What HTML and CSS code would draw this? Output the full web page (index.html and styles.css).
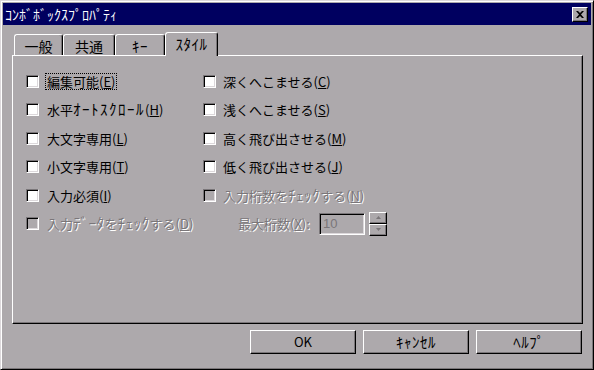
FILE: index.html
```html
<!DOCTYPE html>
<html lang="ja">
<head>
  <meta charset="UTF-8">
  <title>ｺﾝﾎﾞﾎﾞｯｸｽﾌﾟﾛﾊﾟﾃｨ</title>
  <link rel="stylesheet" href="styles.css">
</head>
<body>
  <div class="window">
    <div class="titlebar">
      <span class="title">ｺﾝﾎﾞﾎﾞｯｸｽﾌﾟﾛﾊﾟﾃｨ</span>
      <button class="close-btn">
        <svg width="8" height="7" viewBox="0 0 8 7"><path d="M0 0h2l2 2 2-2h2L5 3.5 8 7H6L4 5 2 7H0l3-3.5z" fill="#000"/></svg>
      </button>
    </div>

    <div class="content">
      <div class="tabs">
        <div class="tab w49">一般</div>
        <div class="tab w52">共通</div>
        <div class="tab w50"><span class="hw">ｷｰ</span></div>
        <div class="tab w53 selected"><span class="hw">ｽﾀｲﾙ</span></div>
      </div>

      <div class="panel">
        <div class="grid">
          <div class="col left-col">
            <div class="row"><span class="box"></span><span class="label focus">編集可能(<u>E</u>)</span></div>
            <div class="row"><span class="box"></span><span class="label">水平<span class="hw wide">ｵｰﾄｽｸﾛｰﾙ</span>(<u>H</u>)</span></div>
            <div class="row"><span class="box"></span><span class="label">大文字専用(<u>L</u>)</span></div>
            <div class="row"><span class="box"></span><span class="label">小文字専用(<u>T</u>)</span></div>
            <div class="row"><span class="box"></span><span class="label">入力必須(<u>I</u>)</span></div>
            <div class="row disabled"><span class="box"></span><span class="label">入力<span class="hw">ﾃﾞｰﾀ</span>を<span class="hw">ﾁｪｯｸ</span>する(<u>D</u>)</span></div>
          </div>
          <div class="col right-col">
            <div class="row"><span class="box"></span><span class="label">深くへこませる(<u>C</u>)</span></div>
            <div class="row"><span class="box"></span><span class="label">浅くへこませる(<u>S</u>)</span></div>
            <div class="row"><span class="box"></span><span class="label">高く飛び出させる(<u>M</u>)</span></div>
            <div class="row"><span class="box"></span><span class="label">低く飛び出させる(<u>J</u>)</span></div>
            <div class="row disabled"><span class="box"></span><span class="label">入力桁数を<span class="hw">ﾁｪｯｸ</span>する(<u>N</u>)</span></div>
            <div class="row disabled maxrow">
              <span class="label">最大桁数(<u>X</u>):</span>
              <span class="field">10</span>
              <span class="spinner">
                <span class="spin up"><svg width="5" height="3" viewBox="0 0 5 3"><path d="M2.5 0L5 3H0z" fill="#7a7679"/></svg></span>
                <span class="spin down"><svg width="5" height="3" viewBox="0 0 5 3"><path d="M0 0h5L2.5 3z" fill="#7a7679"/></svg></span>
              </span>
            </div>
          </div>
        </div>
      </div>

      <div class="buttons">
        <button class="button">OK</button>
        <button class="button"><span class="hw">ｷｬﾝｾﾙ</span></button>
        <button class="button"><span class="hw">ﾍﾙﾌﾟ</span></button>
      </div>
    </div>
  </div>
</body>
</html>
```

FILE: styles.css
```css
* {
  margin: 0;
  padding: 0;
  box-sizing: border-box;
}

body {
  width: 594px;
  height: 370px;
  background: #ada9ac;
  font-family: "Noto Sans CJK JP", "Liberation Sans", sans-serif;
  font-size: 13px;
  color: #000;
  overflow: hidden;
}

.window {
  width: 594px;
  height: 370px;
  border: 1px solid;
  border-color: #dcd8db #000 #000 #dcd8db;
  box-shadow: inset 1px 1px #fff, inset -1px -1px #7a7679;
  padding: 2px;
  display: flex;
  flex-direction: column;
}

.titlebar {
  height: 22px;
  background: #000060;
  color: #fff;
  display: flex;
  align-items: center;
  justify-content: space-between;
  padding: 0 3px 0 2px;
}

.title {
  font-size: 14px;
  line-height: 22px;
}

.close-btn {
  width: 16px;
  height: 15px;
  background: #ada9ac;
  border: 1px solid;
  border-color: #fff #000 #000 #fff;
  box-shadow: inset -1px -1px #7a7679;
  display: flex;
  align-items: center;
  justify-content: center;
}

.hw {
  font-size: 15px;
  letter-spacing: 0.5px;
}

.hw.wide {
  letter-spacing: 1.5px;
}

.content {
  flex: 1;
  padding: 7px 8px 0 9px;
  display: flex;
  flex-direction: column;
}

.tabs {
  display: flex;
  align-items: flex-end;
  padding-left: 2px;
  height: 23px;
  position: relative;
  z-index: 1;
}

.tab {
  height: 21px;
  border: 1px solid;
  border-bottom: none;
  border-color: #fff #000 transparent #fff;
  border-radius: 3px 3px 0 0;
  box-shadow: inset -1px 0 #7a7679;
  display: flex;
  align-items: center;
  justify-content: center;
  padding-top: 1px;
  font-size: 14px;
  line-height: 16px;
}

.tab.selected {
  height: 24px;
  margin-bottom: -1px;
  background: #ada9ac;
  padding-bottom: 3px;
}

.w49 { width: 49px; }
.w52 { width: 52px; }
.w50 { width: 50px; }
.w53 { width: 53px; }

.panel {
  height: 269px;
  width: 571px;
  border: 1px solid;
  border-color: #fff #000 #000 #fff;
  box-shadow: inset -1px -1px #7a7679;
  padding: 11px 0 0 13px;
}

.grid {
  display: grid;
  grid-template-columns: 177px 1fr;
}

.row {
  height: 28.5px;
  display: flex;
  align-items: center;
  white-space: nowrap;
}

.box {
  width: 13px;
  height: 13px;
  flex: none;
  background: #fff;
  border: 1px solid;
  border-color: #7a7679 #fff #fff #7a7679;
  box-shadow: inset 1px 1px #000, inset -1px -1px #dcd8db;
}

.label {
  margin-left: 6px;
  line-height: 15px;
  padding: 0 1px;
  border: 1px solid transparent;
}

.label .hw {
  line-height: 13px;
}

.label.focus {
  border: 1px dotted #000;
}

.right-col .label {
  margin-left: 5px;
}

.disabled .box {
  background: #ada9ac;
}

.disabled .label {
  color: #7a7679;
  text-shadow: 1px 1px #fff;
}

.maxrow {
  padding-left: 33px;
}

.maxrow .label {
  margin-left: 0;
  width: 83px;
}

.field {
  width: 46px;
  height: 22px;
  border: 1px solid;
  border-color: #7a7679 #fff #fff #7a7679;
  box-shadow: inset 1px 1px #000, inset -1px -1px #dcd8db;
  color: #7a7679;
  font-family: "Liberation Sans", sans-serif;
  font-size: 13px;
  line-height: 20px;
  padding-left: 3px;
}

.spinner {
  display: flex;
  flex-direction: column;
  margin-left: 4px;
  height: 24px;
}

.spin {
  width: 18px;
  height: 12px;
  border: 1px solid;
  border-color: #fff #000 #000 #fff;
  box-shadow: inset -1px -1px #7a7679;
  display: flex;
  align-items: center;
  justify-content: center;
}

.buttons {
  display: flex;
  justify-content: flex-end;
  gap: 7px;
  margin-top: 6px;
  padding-right: 1px;
}

.button {
  width: 106px;
  height: 24px;
  background: #ada9ac;
  border: 1px solid;
  border-color: #fff #000 #000 #fff;
  box-shadow: inset -1px -1px #7a7679;
  font-family: "Noto Sans CJK JP", "Liberation Sans", sans-serif;
  font-size: 13px;
  line-height: 16px;
  color: #000;
}
```
